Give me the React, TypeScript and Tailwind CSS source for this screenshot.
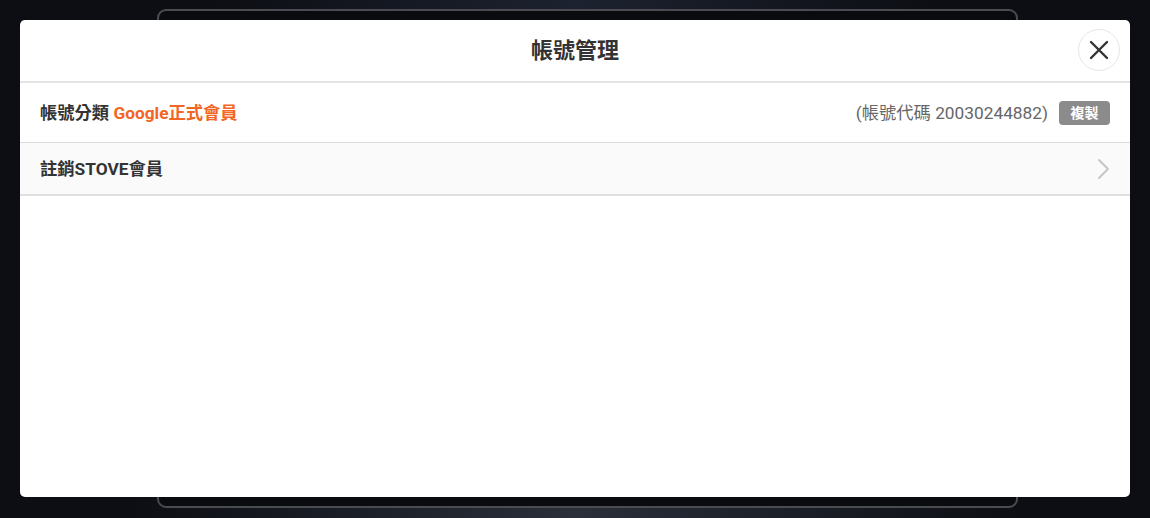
import React from "react";

export default function App() {
  return (
    <div
      className="relative w-[1150px] h-[518px] overflow-hidden bg-[#0c0e13] px-[20px] pt-[20px] pb-[21px] flex"
      style={{ fontFamily: "Roboto, 'Noto Sans CJK TC', sans-serif" }}
    >
      {/* background glow */}
      <div className="absolute inset-0 bg-[radial-gradient(ellipse_at_50%_100%,#2a2f3a_0%,#0c0e13_55%)]" />
      <div className="absolute inset-0 bg-[radial-gradient(ellipse_at_50%_0%,#1d2230_0%,transparent_45%)]" />
      {/* back frame */}
      <div className="absolute left-[157px] top-[9px] w-[861px] h-[499px] rounded-[9px] border-2 border-[#4a4c52] bg-[#0a0b0f]" />

      {/* modal */}
      <div className="relative flex-1 flex flex-col rounded-[5px] bg-white overflow-hidden">
        <div className="relative h-[63px] flex items-center justify-center border-b-2 border-[#e4e4e4]">
          <span className="text-[22px] font-bold text-[#333] leading-none">帳號管理</span>
          <button className="absolute right-[10px] top-[9px] w-[42px] h-[42px] rounded-full border border-[#e6e6e6] flex items-center justify-center">
            <svg width="20" height="20" viewBox="0 0 20 20" fill="none">
              <path d="M2 2 L18 18 M18 2 L2 18" stroke="#333" strokeWidth="2.4" strokeLinecap="round" />
            </svg>
          </button>
        </div>

        <div className="h-[60px] flex items-center justify-between pl-[20px] pr-[20px] pt-[2px] border-b border-[#dcdcdc]">
          <div className="text-[17.3px] font-bold text-[#333] leading-none">
            帳號分類 <span className="text-[#f26522]">Google正式會員</span>
          </div>
          <div className="flex items-center gap-[11px] -mt-[2px]">
            <span className="text-[17.3px] text-[#666] leading-none pt-[2px]">(帳號代碼 20030244882)</span>
            <button className="w-[51px] h-[24px] rounded-[4px] bg-[#8b8b8b] text-white text-[14px] font-bold leading-none flex items-center justify-center">
              複製
            </button>
          </div>
        </div>

        <div className="h-[53px] flex items-center justify-between pl-[20px] pr-[19px] bg-[#fafafa] border-b-2 border-[#e0e0e0]">
          <span className="text-[17.3px] font-bold text-[#333] leading-none pt-[3px]">註銷STOVE會員</span>
          <svg width="14" height="22" viewBox="0 0 14 22" fill="none">
            <path d="M2 2 L11 11 L2 20" stroke="#c4c4c4" strokeWidth="1.8" strokeLinecap="round" strokeLinejoin="round" />
          </svg>
        </div>

        <div className="flex-1" />
      </div>
    </div>
  );
}
